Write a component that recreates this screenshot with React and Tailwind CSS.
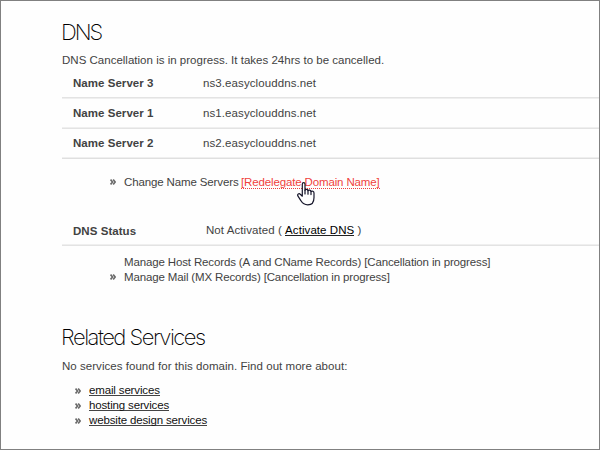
const nameServers = [
  { label: "Name Server 3", value: "ns3.easyclouddns.net", rule: "border-t-[#e3e3e3] border-b-[#efefef]" },
  { label: "Name Server 1", value: "ns1.easyclouddns.net", rule: "border-t-[#efefef] border-b-[#e3e3e3]" },
  { label: "Name Server 2", value: "ns2.easyclouddns.net", rule: "border-t-[#efefef] border-b-[#dfdfdf]" },
];

const services = ["email services", "hosting services", "website design services"];

function Bullet({ className = "" }) {
  return (
    <svg viewBox="0 0 6 6" className={`h-[6px] w-[6px] shrink-0 ${className}`} fill="none" stroke="#6a6a6a" strokeWidth="1.6">
      <path d="M0.6 0.6 2.5 3 0.6 5.4M3.2 0.6 5.1 3 3.2 5.4" />
    </svg>
  );
}

function Rule({ className }) {
  return <div className={`h-[2px] border-t border-b ${className}`} />;
}

function HandCursor() {
  return (
    <svg viewBox="0 0 18 24" className="absolute left-[56px] top-[8px] h-[24px] w-[18px]" fill="#fff" stroke="#15152a" strokeWidth="1.2" strokeLinejoin="round" strokeLinecap="round">
      <path d="M5.3 14.2V2.2C5.3 0.2 8 0.2 8 2.2V8.2C8.6 6.9 10.8 7.1 11 8.7C11.8 7.7 13.8 8 14 9.5C15 8.8 17 9.2 17 11V15.5C17 20 15 22.9 10.8 22.9C7 22.9 5.6 21.5 4 18.8L1 14.2C-0.2 12.2 2.1 11 3.3 12.3Z" />
      <path d="M8 8.2V12M11 8.7V12.2M14 9.7V12.6" fill="none" />
    </svg>
  );
}

export default function App() {
  return (
    <div className="h-[450px] w-[600px] overflow-hidden border border-[#808080] bg-[#fefefe] pl-[61px] font-['Liberation_Sans',Arial,sans-serif] text-[11.5px] leading-[17px] whitespace-nowrap text-[#424242]">
      <h1 className="-ml-px mt-[17px] h-[28px] font-[Inter,sans-serif] text-[22px] leading-[28px] font-extralight tracking-[-2px] text-black">DNS</h1>
      <p className="mt-[6px] h-[15px] tracking-[0.01px]">DNS Cancellation is in progress. It takes 24hrs to be cancelled.</p>

      <div className="pt-[2px]">
        {nameServers.map((row) => (
          <div key={row.label}>
            <div className="flex h-[28px] items-start pt-[6px] pl-[11px]">
              <span className="w-[130px] font-bold tracking-[0.04px]">{row.label}</span>
              <span className="tracking-[0.09px]">{row.value}</span>
            </div>
            <Rule className={row.rule} />
          </div>
        ))}
      </div>

      <div className="mt-[15px] flex h-[15px] items-start pl-[48px]">
        <Bullet className="mt-[5px]" />
        <span className="ml-[8px] w-[114px] tracking-[-0.13px]">Change Name Servers</span>
        <span className="relative ml-[3px] h-[15px] tracking-[-0.14px] text-[#f0413c]">
          <span className="block h-[15px] border-b border-dotted border-[#f0413c]">[Redelegate Domain Name]</span>
          <HandCursor />
        </span>
      </div>

      <div className="mt-[33px] flex h-[15px] pl-[11px]">
        <span className="w-[133px] pt-px font-bold tracking-[0.05px]">DNS Status</span>
        <span className="tracking-[0.07px]">Not Activated ( <span className="inline-block h-[14px] border-b border-[#222] text-black">Activate DNS</span> )</span>
      </div>
      <Rule className="mt-[7px] border-t-[#efefef] border-b-[#e3e3e3]" />

      <div className="mt-[8px] pl-[48px] tracking-[-0.14px]">
        <div className="h-[15px] pl-[14px]">Manage Host Records (A and CName Records) [Cancellation in progress]</div>
        <div className="flex h-[15px] items-start">
          <Bullet className="mt-[5px]" />
          <span className="ml-[8px]">Manage Mail (MX Records) [Cancellation in progress]</span>
        </div>
      </div>

      <h2 className="-ml-px mt-[39px] h-[28px] font-[Inter,sans-serif] text-[22px] leading-[28px] font-extralight tracking-[-1.5px] text-black">Related Services</h2>
      <p className="mt-[7px] h-[15px] tracking-[0.04px]">No services found for this domain. Find out more about:</p>

      <ul className="mt-[9px]">
        {services.map((name) => (
          <li key={name} className="flex h-[15px] items-start pl-[13px]">
            <Bullet className="mt-[6px]" />
            <a className="ml-[8px] h-[14px] border-b border-[#444] tracking-[-0.15px] text-[#111]">{name}</a>
          </li>
        ))}
      </ul>
    </div>
  );
}
